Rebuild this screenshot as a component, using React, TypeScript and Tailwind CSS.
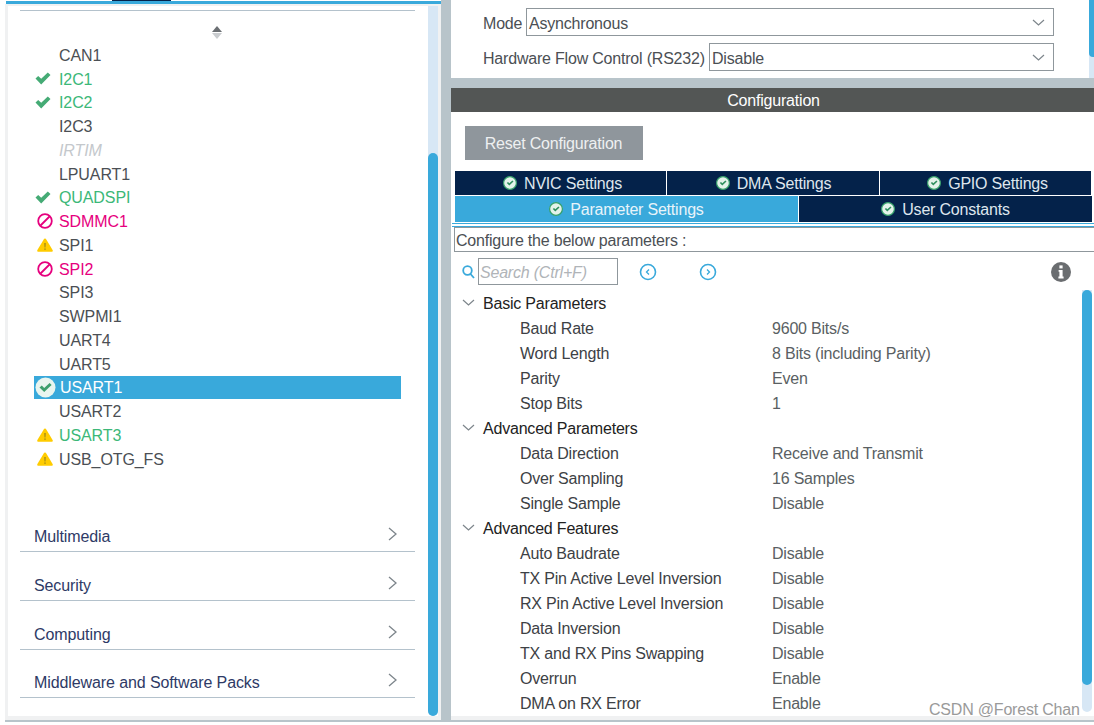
const T = "pt-[2px] text-[16px] tracking-[-0.2px]";
const F = "pt-[4px] text-[16px] tracking-[-0.2px]";

type Status = 'none' | 'ok' | 'ban' | 'warn';

const peripherals: { name: string; status: Status; tone: string; selected?: boolean }[] = [
  { name: 'CAN1', status: 'none', tone: 'text-[#4b4f54]' },
  { name: 'I2C1', status: 'ok', tone: 'text-[#3cb878]' },
  { name: 'I2C2', status: 'ok', tone: 'text-[#3cb878]' },
  { name: 'I2C3', status: 'none', tone: 'text-[#4b4f54]' },
  { name: 'IRTIM', status: 'none', tone: 'text-[#c4c8cc] italic' },
  { name: 'LPUART1', status: 'none', tone: 'text-[#4b4f54]' },
  { name: 'QUADSPI', status: 'ok', tone: 'text-[#3cb878]' },
  { name: 'SDMMC1', status: 'ban', tone: 'text-[#e6007e]' },
  { name: 'SPI1', status: 'warn', tone: 'text-[#4b4f54]' },
  { name: 'SPI2', status: 'ban', tone: 'text-[#e6007e]' },
  { name: 'SPI3', status: 'none', tone: 'text-[#4b4f54]' },
  { name: 'SWPMI1', status: 'none', tone: 'text-[#4b4f54]' },
  { name: 'UART4', status: 'none', tone: 'text-[#4b4f54]' },
  { name: 'UART5', status: 'none', tone: 'text-[#4b4f54]' },
  { name: 'USART1', status: 'ok', tone: 'text-white ml-[1px]', selected: true },
  { name: 'USART2', status: 'none', tone: 'text-[#4b4f54]' },
  { name: 'USART3', status: 'warn', tone: 'text-[#3cb878]' },
  { name: 'USB_OTG_FS', status: 'warn', tone: 'text-[#4b4f54]' },
];

const sections = ['Multimedia', 'Security', 'Computing', 'Middleware and Software Packs'];

const params: { title: string; rows: [string, string][] }[] = [
  {
    title: 'Basic Parameters',
    rows: [
      ['Baud Rate', '9600 Bits/s'],
      ['Word Length', '8 Bits (including Parity)'],
      ['Parity', 'Even'],
      ['Stop Bits', '1'],
    ],
  },
  {
    title: 'Advanced Parameters',
    rows: [
      ['Data Direction', 'Receive and Transmit'],
      ['Over Sampling', '16 Samples'],
      ['Single Sample', 'Disable'],
    ],
  },
  {
    title: 'Advanced Features',
    rows: [
      ['Auto Baudrate', 'Disable'],
      ['TX Pin Active Level Inversion', 'Disable'],
      ['RX Pin Active Level Inversion', 'Disable'],
      ['Data Inversion', 'Disable'],
      ['TX and RX Pins Swapping', 'Disable'],
      ['Overrun', 'Enable'],
      ['DMA on RX Error', 'Enable'],
    ],
  },
];

function CheckMark() {
  return (
    <svg width="16" height="13" viewBox="0 0 16 13" className="ml-[1px]">
      <path d="M0.5 6.5 L3.2 4 L6.2 6.8 L12.8 0.6 L15.5 3 L6.2 12.4 Z" fill="#45ab75" />
    </svg>
  );
}

function OkCircle() {
  return (
    <svg width="21" height="21" viewBox="0 0 21 21" className="ml-[1px]">
      <circle cx="10.5" cy="10.5" r="10" fill="#e9f5ef" />
      <path d="M4.5 10.5 L6.8 8.6 L9.2 11 L14.6 6 L16.6 8 L9.2 15 Z" fill="#3d9f6c" />
    </svg>
  );
}

function BanIcon() {
  return (
    <svg width="16" height="16" viewBox="0 0 16 16" fill="none" stroke="#e6007e" strokeWidth="1.8" className="ml-[3px]">
      <circle cx="8" cy="8" r="6.8" />
      <path d="M3.5 12.5 L12.5 3.5" />
    </svg>
  );
}

function WarnIcon() {
  return (
    <svg width="16" height="14" viewBox="0 0 16 14" className="ml-[3px]">
      <path d="M8 0.5 C8.6 0.5 9 0.9 9.3 1.4 L15.6 12 C16.1 13 15.6 13.7 14.6 13.7 L1.4 13.7 C0.4 13.7 -0.1 13 0.4 12 L6.7 1.4 C7 0.9 7.4 0.5 8 0.5 Z" fill="#ffcc00" />
      <path d="M7.4 5 H8.6 L8.4 9.6 H7.6 Z M7.4 10.6 H8.6 V11.8 H7.4 Z" fill="#8a7a20" />
    </svg>
  );
}

function StatusIcon({ status, selected }: { status: Status; selected?: boolean }) {
  if (status === 'ok') return selected ? <OkCircle /> : <CheckMark />;
  if (status === 'ban') return <BanIcon />;
  if (status === 'warn') return <WarnIcon />;
  return null;
}

function TabCheck() {
  return (
    <svg width="14" height="14" viewBox="0 0 14 14" className="shrink-0">
      <circle cx="7" cy="7" r="6.4" fill="#e4f3ea" stroke="#35a06a" strokeWidth="1.2" />
      <path d="M3.8 7 L5 6 L6.3 7.3 L9.4 4.4 L10.5 5.5 L6.3 9.6 Z" fill="#2f8f5e" />
    </svg>
  );
}

function SmallChevronDown({ className = '' }: { className?: string }) {
  return (
    <svg width="13" height="7" viewBox="0 0 13 7" fill="none" stroke="#7d858b" strokeWidth="1.2" className={className}>
      <path d="M1 1 L6.5 6 L12 1" />
    </svg>
  );
}

function Tab({ label, active, className = '' }: { label: string; active?: boolean; className?: string }) {
  return (
    <div
      className={`flex items-center justify-center gap-[7px] ${
        active ? 'bg-[#39a9db] text-[#e8f4fa]' : 'bg-[#04224a] text-[#dfe6ee]'
      } ${className}`}
    >
      <TabCheck />
      <span className={T}>{label}</span>
    </div>
  );
}

function SelectBox({ value, className = '' }: { value: string; className?: string }) {
  return (
    <div className={`flex h-[28px] items-center justify-between border border-[#8f979c] pr-[8px] pl-[2px] ${className}`}>
      <span className={`${F} text-[#4b4f54]`}>{value}</span>
      <SmallChevronDown />
    </div>
  );
}

export default function App() {
  return (
    <div className="relative flex h-[725px] w-[1094px] overflow-hidden bg-white font-['Liberation_Sans',Arial,sans-serif]">
      {/* peripheral list */}
      <div className="flex h-[722px] w-[441px] flex-col">
        <div className="ml-[112px] h-[1px] w-[59px] shrink-0 bg-[#04224a]" />
        <div className="ml-[6px] h-[3px] shrink-0 bg-[#39a9db]" />
        <div className="ml-[5px] h-[2px] shrink-0 bg-[#f0f1f2]" />
        <div className="ml-[5px] flex h-[710px] shrink-0 border-l-[3px] border-[#f0f1f2]">
          <div className="w-[420px] pl-[12px]">
            <div className="mt-[4px] h-[1px] w-[395px] bg-[#b4c2cc]" />
            <div className="mt-[15px] ml-[192px] flex h-[14px] w-[10px] flex-col items-center gap-[1px]">
              <div className="h-0 w-0 border-x-[5px] border-b-[6px] border-x-transparent border-b-[#6b6f73]" />
              <div className="h-0 w-0 border-x-[5px] border-t-[6px] border-x-transparent border-t-[#c9cccf]" />
            </div>
            <div className="mt-[3px] ml-[14px] w-[367px]">
              {peripherals.map((p) => (
                <div
                  key={p.name}
                  className={`flex h-[23.75px] items-center text-[16px] tracking-[-0.1px] ${p.selected ? 'bg-[#39a9db]' : ''}`}
                >
                  <div className="flex w-[25px] shrink-0 items-center">
                    <StatusIcon status={p.status} selected={p.selected} />
                  </div>
                  <span className={`pt-[2px] ${p.tone}`}>{p.name}</span>
                </div>
              ))}
            </div>
            <div className="mt-[32.75px] w-[395px]">
              {sections.map((s) => (
                <div
                  key={s}
                  className="flex h-[48.75px] items-end justify-between border-b border-[#b4c2cc] pr-[18px] pb-[2px] pl-[14px]"
                >
                  <span className="text-[16px] tracking-[-0.1px] text-[#2e3a66]">{s}</span>
                  <svg width="9" height="14" viewBox="0 0 9 14" fill="none" stroke="#7d858b" strokeWidth="1.3" className="mb-[8px]">
                    <path d="M1 1 L8 7 L1 13" />
                  </svg>
                </div>
              ))}
            </div>
          </div>
          <div className="h-[710px] w-[10px] rounded-b-[5px] bg-[#d7e7f5]">
            <div className="mt-[147px] h-[563px] rounded-[5px] bg-[#39a9db]" />
          </div>
          <div className="w-[3px] bg-[#f0f1f2]" />
        </div>
        <div className="ml-[5px] h-[4px] shrink-0 bg-[#f0f1f2]" />
        <div className="ml-[5px] h-[2px] shrink-0 bg-[#b8c4ca]" />
      </div>
      <div className="h-[722px] w-[10px] bg-[#b8c4ca]" />

      {/* mode + configuration */}
      <div className="flex h-[722px] flex-1 flex-col">
        <div className="flex h-[78px] shrink-0">
          <div className="flex-1 pt-[8px] pl-[32px]">
            <div className="flex items-center pr-[35px]">
              <span className={`w-[43px] ${F} text-[#4b4f54]`}>Mode</span>
              <SelectBox value="Asynchronous" className="flex-1" />
            </div>
            <div className="mt-[7px] flex items-center pr-[35px]">
              <span className={`w-[226px] ${F} text-[#4b4f54]`}>Hardware Flow Control (RS232)</span>
              <SelectBox value="Disable" className="flex-1" />
            </div>
          </div>
          <div className="w-[5px] bg-[#d7e7f5]">
            <div className="h-[57px] rounded-bl-[4px] bg-[#39a9db]" />
          </div>
        </div>
        <div className="h-[10px] shrink-0 bg-[#b8c4ca]" />
        <div className={`flex h-[24px] shrink-0 items-center justify-center bg-[#535655] pl-[2px] ${T} text-white`}>
          Configuration
        </div>
        <div className={`mt-[14px] ml-[14px] flex h-[34px] w-[178px] shrink-0 items-center justify-center bg-[#8f969c] pr-[1px] ${T} text-[#eef0f1]`}>
          Reset Configuration
        </div>
        <div className="mt-[11px] ml-[4px] flex h-[24px] w-[636px] shrink-0 gap-[1px]">
          <Tab label="NVIC Settings" className="w-[211px] pl-[4px]" />
          <Tab label="DMA Settings" className="w-[212px] pl-[1px]" />
          <Tab label="GPIO Settings" className="flex-1 pl-[4px]" />
        </div>
        <div className="mt-[1px] ml-[4px] flex h-[26px] w-[637px] shrink-0 gap-[1px]">
          <Tab label="Parameter Settings" active className="w-[343px]" />
          <Tab label="User Constants" className="flex-1" />
        </div>
        <div className="mt-[1px] ml-[1px] h-[1px] shrink-0 bg-[#39a9db]" />
        <div className="mt-[1.5px] ml-[1px] h-[1px] shrink-0 bg-[#39a9db]" />
        <div className="mt-[0.5px] ml-[3px] flex h-[25px] shrink-0 items-center border border-r-0 border-[#8f979c] pl-[1px]">
          <span className={`${T} text-[#4b4f54]`}>Configure the below parameters :</span>
        </div>
        <div className="mt-[6px] flex h-[27px] shrink-0 items-center">
          <div className="flex w-[27px] justify-end pr-[3px]">
            <svg width="13" height="14" viewBox="0 0 13 14" fill="none" stroke="#39a9db" strokeWidth="1.8">
              <circle cx="5.5" cy="5.5" r="4.3" />
              <path d="M8.5 9 L12 13" />
            </svg>
          </div>
          <div className={`flex h-[27px] w-[140px] items-center border border-[#8f979c] pl-[1px] ${T} text-[#b0b4b8] italic`}>
            Search (Ctrl+F)
          </div>
          <svg width="18" height="18" viewBox="0 0 18 18" fill="none" stroke="#39a9db" className="ml-[21px]">
            <circle cx="9" cy="9" r="7.5" strokeWidth="1.6" />
            <path d="M10 6.5 L7.5 9 L10 11.5" strokeWidth="1.3" />
          </svg>
          <svg width="18" height="18" viewBox="0 0 18 18" fill="none" stroke="#39a9db" className="ml-[42px]">
            <circle cx="9" cy="9" r="7.5" strokeWidth="1.6" />
            <path d="M8 6.5 L10.5 9 L8 11.5" strokeWidth="1.3" />
          </svg>
          <svg width="20" height="20" viewBox="0 0 20 20" className="ml-[334px]">
            <circle cx="10" cy="10" r="10" fill="#6a6d70" />
            <rect x="8.4" y="3.4" width="3.2" height="3" fill="#fff" />
            <path d="M7.6 8 H11.6 V14.6 H12.6 V16.4 H7.4 V14.6 H8.4 V9.8 H7.6 Z" fill="#fff" />
          </svg>
        </div>
        <div className="mt-[5px] flex min-h-0 flex-1">
          <div className="flex-1">
            {params.map((group) => (
              <div key={group.title}>
                <div className="flex h-[25px] items-center">
                  <SmallChevronDown className="ml-[11px]" />
                  <span className={`ml-[8px] ${T} text-[#222]`}>{group.title}</span>
                </div>
                {group.rows.map(([name, value]) => (
                  <div key={name} className="flex h-[25px] items-center">
                    <span className={`ml-[69px] w-[252px] ${T} text-[#3d4145]`}>{name}</span>
                    <span className={`${T} text-[#5a5f63]`}>{value}</span>
                  </div>
                ))}
              </div>
            ))}
          </div>
          <div className="mr-[2px] h-[422px] w-[10px] rounded-b-[5px] bg-[#d7e7f5]">
            <div className="h-[395px] rounded-[5px] bg-[#39a9db]" />
          </div>
        </div>
        <div className="h-[4px] shrink-0 bg-[#f0f1f2]" />
        <div className="h-[2px] shrink-0 bg-[#b8c4ca]" />
      </div>

      {/* blog watermark over the capture */}
      <div className="absolute top-[701px] left-[929px] text-[16px] leading-[18px] tracking-[-0.2px] text-[#9a9a9a]">
        CSDN @Forest Chan
      </div>
    </div>
  );
}
